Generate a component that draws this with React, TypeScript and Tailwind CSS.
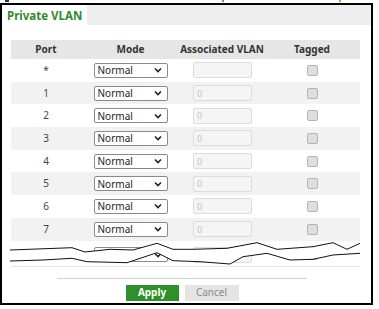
import React from "react";

const rows = ["*", "1", "2", "3", "4", "5", "6", "7"];

function Chevron() {
  return (
    <svg width="8" height="6" viewBox="0 0 8 6" className="shrink-0">
      <path d="M1 1.5 L4 4.5 L7 1.5" fill="none" stroke="#222" strokeWidth="1.6" />
    </svg>
  );
}

function Row({ port, gray, tall }: { port: string; gray: boolean; tall?: boolean }) {
  return (
    <div
      className={`grid grid-cols-[70px_99px_84px_96px] items-center ${
        tall ? "h-[25.4px] pt-[3px]" : "h-[22.7px]"
      } ${gray ? "bg-[#f2f2f2]" : "bg-white"}`}
    >
      <div className="text-center text-[10px] text-[#444]">{port}</div>
      <div className="flex justify-center">
        <div className="flex h-[15px] w-[74px] items-center justify-between rounded-[2px] border border-[#8a8a8a] bg-white pl-[3px] pr-[5px] text-[10px] leading-none text-[#222]">
          <span>Normal</span>
          <Chevron />
        </div>
      </div>
      <div className="flex justify-center pl-[1px]">
        <div className="flex h-[16px] w-[59px] items-center rounded-[2px] border border-[#dcdcdc] bg-[#f5f5f5] pl-[3px] text-[9px] leading-none text-[#c4c4c4]">
          {port === "*" ? "" : "0"}
        </div>
      </div>
      <div className="flex justify-center">
        <div className="h-[11px] w-[11px] rounded-[2px] border border-[#b4b4b4] bg-[#dedede]" />
      </div>
    </div>
  );
}

export default function App() {
  return (
    <div
      className="relative h-[309px] w-[379px] overflow-hidden bg-white"
      style={{ fontFamily: '"Noto Sans", "Liberation Sans", sans-serif' }}
    >
      {/* cut-off remnants above the frame */}
      <div className="flex h-[3px] items-start">
        <div className="ml-[5px] h-[2px] w-[4px] bg-[#333]" />
        <div className="ml-[213px] h-[2px] w-[2px] bg-[#6a86c0]" />
        <div className="ml-[115px] h-[2px] w-[2px] bg-[#e0902a]" />
      </div>

      <div className="flex h-[302px] w-[373px] flex-col border-2 border-black bg-white">
        {/* tab bar */}
        <div className="flex h-[20px] shrink-0 bg-[#eeeeee]">
          <div className="flex w-[85px] items-center bg-white pl-[5px] pt-[1px] text-[11.5px] font-bold text-[#2f8a2f]">
            Private VLAN
          </div>
        </div>

        {/* table */}
        <div className="ml-[9px] mt-[15px] w-[349px] border-b border-[#e6e6e6]">
          <div className="grid h-[19px] grid-cols-[70px_99px_84px_96px] items-center bg-[#e6e6e6] text-[10px] font-bold text-[#333]">
            <div className="text-center">Port</div>
            <div className="text-center">Mode</div>
            <div className="text-center">Associated VLAN</div>
            <div className="text-center">Tagged</div>
          </div>
          {rows.map((p, i) => (
            <Row key={p} port={p} gray={i % 2 === 1} />
          ))}
          <Row port="8" gray={false} tall />
        </div>

        {/* divider + buttons */}
        <div className="ml-[55px] mt-[11px] w-[250px]">
          <div className="h-[1px] bg-[#d0d0d0]" />
          <div className="mt-[6px] flex justify-center gap-[6px]">
            <div className="flex h-[16px] w-[53px] items-center justify-center bg-[#2f8f2a] text-[10px] font-bold text-white">
              Apply
            </div>
            <div className="flex h-[16px] w-[54px] items-center justify-center bg-[#e4e4e4] text-[10px] text-[#8a8a8a]">
              Cancel
            </div>
          </div>
        </div>
      </div>

      {/* torn-edge break lines over the truncated row */}
      <svg
        className="pointer-events-none absolute left-0 top-0"
        width="379"
        height="309"
        viewBox="0 0 379 309"
      >
        <polygon
          fill="#ffffff"
          points="10,250 72,247.7 85,252 110,249.3 133,250 157,243.3 173,249.3 193,249.3 227,248.3 257,242.7 277,249.3 313,246.7 333,242.7 347,249.3 360,243.3 360,253.3 333,255 313,259.3 290,260 267,253.3 243,256.7 230,264 200,261.7 173,260.7 157,252.7 127,262.7 87,261.7 72,258.3 43,260 10,261"
        />
        <polyline
          fill="none"
          stroke="#111"
          strokeWidth="1"
          points="10,250 72,247.7 85,252 110,249.3 133,250 157,243.3 173,249.3 193,249.3 227,248.3 257,242.7 277,249.3 313,246.7 333,242.7 347,249.3 360,243.3"
        />
        <polyline
          fill="none"
          stroke="#111"
          strokeWidth="1"
          points="10,261 43,260 72,258.3 87,261.7 127,262.7 157,252.7 173,260.7 200,261.7 230,264 243,256.7 267,253.3 290,260 313,259.3 333,255 360,253.3"
        />
      </svg>
    </div>
  );
}
